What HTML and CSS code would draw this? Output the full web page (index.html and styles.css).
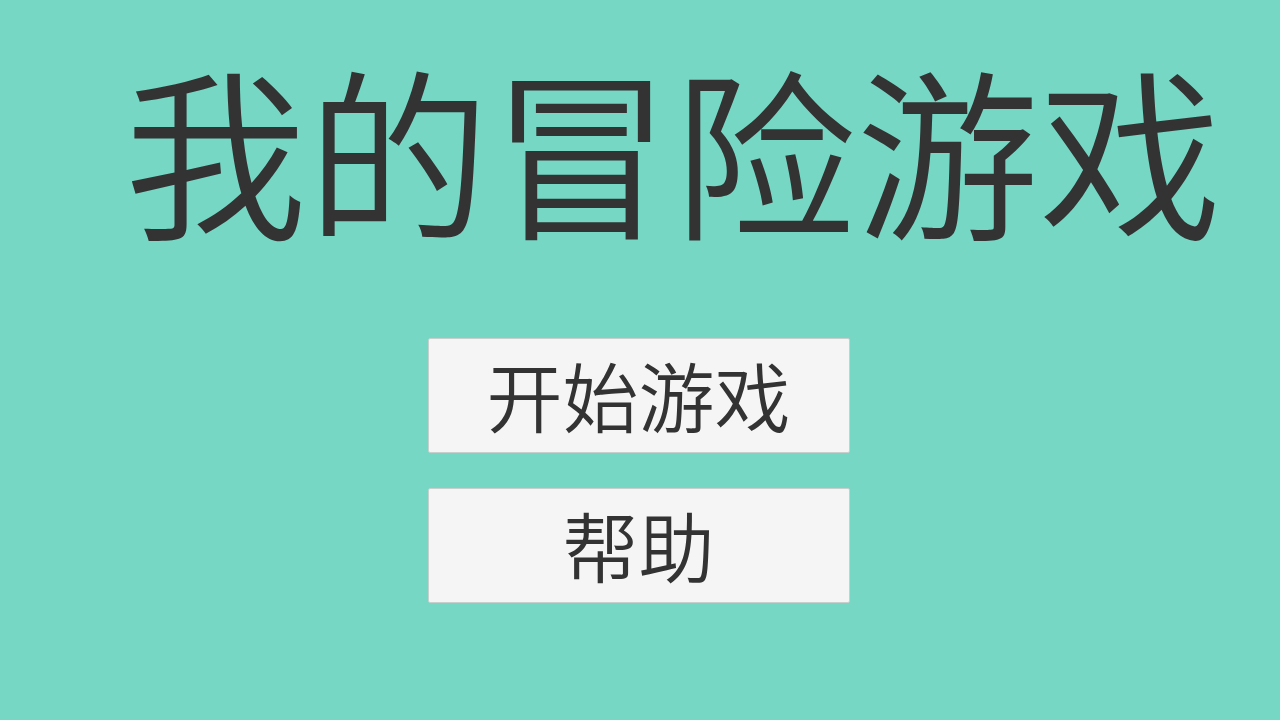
FILE: index.html
```html
<!DOCTYPE html>
<html lang="zh-CN">
<head>
<meta charset="utf-8">
<title>我的冒险游戏</title>
<link rel="stylesheet" href="styles.css">
</head>
<body>
<main class="screen">
  <h1 class="title">我的冒险游戏</h1>
  <nav class="menu">
    <button class="menu-btn">开始游戏</button>
    <button class="menu-btn">帮助</button>
  </nav>
</main>
</body>
</html>
```
FILE: styles.css
```css
html, body {
  margin: 0;
  padding: 0;
  width: 1280px;
  height: 720px;
  overflow: hidden;
  background: #76d7c4;
}
.screen {
  display: flex;
  flex-direction: column;
  align-items: center;
  font-family: "Noto Sans CJK SC", "Noto Sans", sans-serif;
  color: #333333;
}
.title {
  margin: 42px 0 0 66px;
  font-size: 183px;
  font-weight: 350;
  line-height: 210px;
  letter-spacing: 0;
  white-space: nowrap;
}
.menu {
  display: flex;
  flex-direction: column;
  gap: 35px;
  margin: 86px 3px 0 0;
}
.menu-btn {
  width: 422px;
  height: 115px;
  background: #f5f5f5;
  border: 1px solid #c8cfcd;
  border-radius: 2px;
  font-family: "Noto Sans CJK SC", sans-serif;
  font-weight: 350;
  font-size: 76px;
  color: #333333;
  padding: 0 0 4px 0;
  line-height: 1;
}
```
